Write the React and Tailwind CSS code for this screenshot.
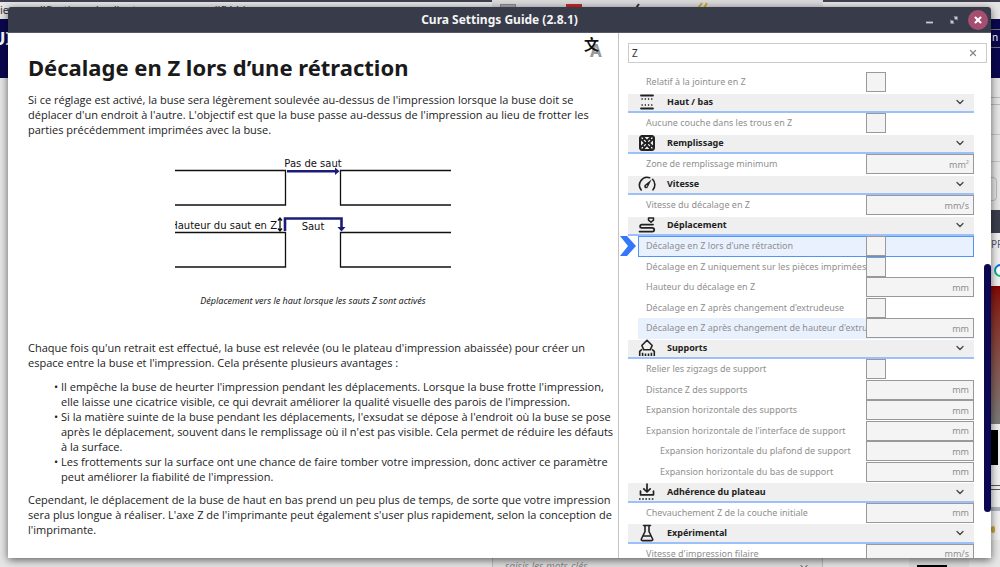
import { useState } from 'react';
import { ChevronDown, X } from 'lucide-react';

const ITEMS = [
    { label: 'Relatif à la jointure en Z' },
    { title: 'Haut / bas', icon: 'topbottom' },
    { label: 'Aucune couche dans les trous en Z' },
    { title: 'Remplissage', icon: 'infill' },
    { label: 'Zone de remplissage minimum', unit: 'mm²' },
    { title: 'Vitesse', icon: 'speed' },
    { label: 'Vitesse du décalage en Z', unit: 'mm/s' },
    { title: 'Déplacement', icon: 'travel' },
    { label: "Décalage en Z lors d'une rétraction", state: 'selected' },
    { label: 'Décalage en Z uniquement sur les pièces imprimées' },
    { label: 'Hauteur du décalage en Z', unit: 'mm' },
    { label: "Décalage en Z après changement d'extrudeuse" },
    { label: "Décalage en Z après changement de hauteur d'extrudeuse", unit: 'mm', state: 'hover' },
    { title: 'Supports', icon: 'support' },
    { label: 'Relier les zigzags de support' },
    { label: 'Distance Z des supports', unit: 'mm' },
    { label: 'Expansion horizontale des supports', unit: 'mm' },
    { label: "Expansion horizontale de l'interface de support", unit: 'mm' },
    { label: 'Expansion horizontale du plafond de support', unit: 'mm', nested: true },
    { label: 'Expansion horizontale du bas de support', unit: 'mm', nested: true },
    { title: 'Adhérence du plateau', icon: 'adhesion' },
    { label: 'Chevauchement Z de la couche initiale', unit: 'mm' },
    { title: 'Expérimental', icon: 'experimental' },
    { label: "Vitesse d'impression filaire", unit: 'mm/s' },
];

const ICONS = {
    topbottom: (
        <>
            <path d="M3 2.5h12M3 15.5h12" strokeWidth="1.8" />
            <path d="M3.5 6h11M3.5 12h11" strokeWidth="1.3" strokeDasharray="1.3 1.9" strokeLinecap="butt" />
        </>
    ),
    infill: (
        <>
            <rect x="1.5" y="1.5" width="15" height="15" rx="2.5" fill="#222" />
            <path d="M6.6 3h4.8L9 5.6zM6.6 15h4.8L9 12.4zM3 6.6v4.8L5.6 9zM15 6.6v4.8L12.4 9z" fill="#f0f0f0" stroke="none" />
            <path d="m6.4 6.4 1 1M11.6 6.4l-1 1M6.4 11.6l1-1M11.6 11.6l-1-1M4 4l.5.5M14 4l-.5.5M4 14l.5-.5M14 14l-.5-.5" stroke="#f0f0f0" strokeWidth="1.3" />
        </>
    ),
    speed: (
        <>
            <path d="M3.2 15A7.8 7.8 0 0 1 11.6 2.7M14.6 4.3a7.8 7.8 0 0 1 .4 10.5" strokeWidth="1.6" />
            <path d="M13.6 4.6 9.8 12.2A1.9 1.9 0 1 1 7.3 9.6z" fill="#222" stroke="none" />
            <circle cx="8.6" cy="11" r=".8" fill="#f0f0f0" stroke="none" />
        </>
    ),
    travel: (
        <>
            <path d="M10.5 2h5v2.2l-2.5 2-2.5-2z" strokeWidth="1.5" />
            <path d="M15 8.6H3.7a1.6 1.6 0 0 0 0 3.2h10.6a1.9 1.9 0 0 1 0 3.8H1.5" strokeWidth="1.8" />
        </>
    ),
    support: (
        <>
            <path d="m9 1.2 5.2 5.3-2 4.3H5.8l-2-4.3z" strokeWidth="1.6" />
            <path d="M1.7 17v-4.7l2.3-2M16.3 17v-4.7l-2.3-2M4.6 17v-3.3M7.5 17v-2.4M10.5 17v-2.4M13.4 17v-3.3" strokeWidth="1.6" strokeLinecap="butt" />
        </>
    ),
    adhesion: (
        <>
            <path d="M9 1v7.5M5.8 5.8 9 9l3.2-3.2M2.5 8v3.8h13V8" strokeWidth="1.7" />
            <path d="M1 16h16" strokeWidth="1.6" strokeDasharray="1.6 1.6" strokeLinecap="butt" />
        </>
    ),
    experimental: (
        <path d="M5.5 1.5h7M7 2v5.5L3.4 15q-.6 1.6 1 1.6h9.2q1.6 0 1-1.6L11 7.5V2M5.6 12h6.8" strokeWidth="1.6" />
    ),
};

function CategoryIcon({ name }) {
    return (
        <svg viewBox="0 0 18 18" className="size-[18px] shrink-0" fill="none" stroke="#222" strokeLinecap="round" strokeLinejoin="round">
            {ICONS[name]}
        </svg>
    );
}

function Category({ title, icon }) {
    return (
        <button className="mt-px flex items-center border-b-2 border-[#9cc0fb] bg-[#efefef] pr-2 pl-2.5 text-left">
            <CategoryIcon name={icon} />
            <span className="ml-[11px] flex-1 text-[9px] leading-[16px] font-bold text-[#222]">{title}</span>
            <ChevronDown className="size-3 text-[#444]" strokeWidth={2.5} />
        </button>
    );
}

function Setting({ id, label, unit, state, nested }) {
    let rowClass = 'border-transparent';
    if (state === 'selected') rowClass = 'border-[#5294f5] bg-[#e9f1fe]';
    if (state === 'hover') rowClass = 'border-transparent bg-[#e9f1fe]';

    return (
        <div className={`relative ml-2.5 flex min-w-0 items-center border ${rowClass}`}>
            {state === 'selected' && (
                <svg viewBox="0 0 16 20" className="absolute -left-[19px] h-5 w-4">
                    <path d="M0 0h7l9 10-9 10H0l8-10z" fill="#3477fb" />
                </svg>
            )}
            <label
                htmlFor={id}
                className={`min-w-0 flex-1 overflow-hidden text-[9px] leading-[16px] whitespace-nowrap text-[#8f8f8f] ${nested ? 'pl-[21px]' : 'pl-[7px]'}`}
            >
                {label}
            </label>
            <div className="-mr-px flex w-[108px] shrink-0">
                {unit ? (
                    <div className="flex h-5 w-full items-center border border-[#999] bg-[#f4f4f4] pr-1 text-[9px] text-[#8f8f8f]">
                        <input id={id} type="text" disabled className="w-full min-w-0 flex-1" />
                        <span>{unit}</span>
                    </div>
                ) : (
                    <input id={id} type="checkbox" disabled className="size-5 appearance-none border border-[#999] bg-[#f4f4f4]" />
                )}
            </div>
        </div>
    );
}

function HopDiagram() {
    return (
        <svg viewBox="175 150 276 130" className="mx-auto mt-[13px] h-[130px] w-[276px]" fill="none" fontFamily="DejaVu Sans, sans-serif" fontSize="10">
            <path d="M175 170.5h110.5V205H175M451 170.5H340.5V205H451" stroke="#111" strokeWidth="1.3" />
            <path d="M175 232.5h110.5V267H175M451 232.5H340.5V267H451" stroke="#111" strokeWidth="1.3" />
            <path d="M287 171.2h49" stroke="#1c1c78" strokeWidth="2.4" />
            <path d="m335 167.5 4.5 3.7-4.5 3.7z" fill="#1c1c78" />
            <path d="M285 231v-12.5h56.5V228" stroke="#1c1c78" strokeWidth="2.6" />
            <path d="M337.5 227h8l-4 4.5z" fill="#1c1c78" />
            <path d="M280 219v11M278 220.5l2-2.5 2 2.5M278 228.5l2 2.5 2-2.5" stroke="#111" strokeWidth="1.3" />
            <text x="313" y="167" textAnchor="middle" fill="#111">Pas de saut</text>
            <text x="277" y="229" textAnchor="end" fill="#111">Hauteur du saut en Z</text>
            <text x="313" y="230" textAnchor="middle" fill="#111">Saut</text>
        </svg>
    );
}

function Article() {
    return (
        <article className="relative min-w-0 flex-1 overflow-hidden pt-[19px] pr-4 pl-5 font-['Open_Sans','Noto_Sans',sans-serif] text-[11px] leading-[15px] whitespace-nowrap text-[#222]">
            <button aria-label="Langue" className="absolute top-1 right-3.5 size-5">
                <svg viewBox="0 0 20 20" className="size-5">
                    <text x="6" y="20" fontSize="17" fontWeight="700" fill="#999" fontFamily="Noto Sans, sans-serif">A</text>
                    <text x="0" y="13" fontSize="15" fontWeight="700" fill="#111" fontFamily="Noto Sans CJK SC, sans-serif">文</text>
                </svg>
            </button>
            <h1 className="mb-2.5 font-['Noto_Sans',sans-serif] text-[22px] leading-[30px] font-bold text-[#1a1a1a]">
                Décalage en Z lors d’une rétraction
            </h1>
            <p>
                Si ce réglage est activé, la buse sera légèrement soulevée au-dessus de l'impression lorsque la buse doit se<br />
                déplacer d'un endroit à l'autre. L'objectif est que la buse passe au-dessus de l'impression au lieu de frotter les<br />
                parties précédemment imprimées avec la buse.
            </p>
            <figure className="mr-1">
                <HopDiagram />
                <figcaption className="mt-[13px] text-center font-['Noto_Sans',sans-serif] text-[9px] italic">
                    Déplacement vers le haut lorsque les sauts Z sont activés
                </figcaption>
            </figure>
            <p className="mt-8">
                Chaque fois qu'un retrait est effectué, la buse est relevée (ou le plateau d'impression abaissée) pour créer un<br />
                espace entre la buse et l'impression. Cela présente plusieurs avantages :
            </p>
            <ul className="mt-[9px] mb-2 ml-[33px] *:relative *:before:absolute *:before:-left-[7px] *:before:content-['•']">
                <li>
                    Il empêche la buse de heurter l'impression pendant les déplacements. Lorsque la buse frotte l'impression,<br />
                    elle laisse une cicatrice visible, ce qui devrait améliorer la qualité visuelle des parois de l'impression.
                </li>
                <li>
                    Si la matière suinte de la buse pendant les déplacements, l'exsudat se dépose à l'endroit où la buse se pose<br />
                    après le déplacement, souvent dans le remplissage où il n'est pas visible. Cela permet de réduire les défauts<br />
                    à la surface.
                </li>
                <li>
                    Les frottements sur la surface ont une chance de faire tomber votre impression, donc activer ce paramètre<br />
                    peut améliorer la fiabilité de l'impression.
                </li>
            </ul>
            <p>
                Cependant, le déplacement de la buse de haut en bas prend un peu plus de temps, de sorte que votre impression<br />
                sera plus longue à réaliser. L'axe Z de l'imprimante peut également s'user plus rapidement, selon la conception de<br />
                l'imprimante.
            </p>
        </article>
    );
}

function SettingsPanel() {
    const [query, setQuery] = useState('Z');

    return (
        <aside className="relative flex w-[373px] shrink-0 flex-col overflow-hidden border-l border-[#c4c4c4] pl-[9px]">
            <div className="mt-2.5 mr-1 flex h-5 shrink-0 items-center border border-[#ccc] pr-2">
                <input
                    type="text"
                    aria-label="Rechercher"
                    value={query}
                    onChange={(e) => setQuery(e.target.value)}
                    className="min-w-0 flex-1 pl-[3px] text-[10px] text-[#333] outline-none"
                />
                <button aria-label="Effacer" onClick={() => setQuery('')}>
                    <X className="size-2.5 text-[#888]" strokeWidth={3} />
                </button>
            </div>
            <div className="mt-[9px] mr-[17px] grid h-[492px] shrink-0 auto-rows-fr grid-cols-1">
                {ITEMS.map((item, index) =>
                    item.title ? <Category key={index} {...item} /> : <Setting key={index} id={`setting-${index}`} {...item} />
                )}
            </div>
            <div className="absolute inset-y-0 right-0 flex w-[7px] flex-col">
                <div className="flex-[231]" />
                <div className="flex-[248] rounded-full bg-[#0b0750]" />
                <div className="flex-[46]" />
            </div>
        </aside>
    );
}

function TitleBar() {
    return (
        <header className="relative flex h-[26px] shrink-0 items-center justify-end gap-1.5 rounded-t-[3px] border-b border-[#555866] bg-[#383c4a] pr-[3px] text-[#c9cbd0]">
            <h2 className="absolute inset-x-0 text-center text-[12px] font-bold text-[#f4f4f4]">Cura Settings Guide (2.8.1)</h2>
            <button aria-label="Réduire" className="relative size-4">
                <svg viewBox="0 0 16 16" className="size-4"><path d="M2 10.5h7" stroke="currentColor" strokeWidth="1.8" /></svg>
            </button>
            <button aria-label="Agrandir" className="relative size-4">
                <svg viewBox="0 0 16 16" className="size-4">
                    <path d="M7.5 4.5h4v4zM4.5 7.5v4h4z" fill="currentColor" />
                    <path d="m5.5 10.5 1.8-1.8M8.7 7.3l1.8-1.8" stroke="currentColor" strokeWidth="1.4" />
                </svg>
            </button>
            <button aria-label="Fermer" className="relative flex size-5 items-center justify-center rounded-full bg-[#a54e6f] text-white">
                <X className="size-2.5" strokeWidth={5} />
            </button>
        </header>
    );
}

// Other windows on the desktop, mostly hidden behind the guide
function Desktop() {
    return (
        <div aria-hidden="true" className="absolute inset-0 overflow-hidden bg-[#e6e6e6] text-[11px] text-[#333]">
            <div className="absolute inset-x-0 top-0 h-0.5 bg-[#3f4150]" />
            <div className="absolute top-0.5 left-0">ie</div>
            <div className="absolute top-0.5 left-9">difications du client avec cura, modifié bien</div>
            <div className="absolute top-[19px] left-0 h-[59px] w-full bg-[#0b0750] text-white">
                <span className="absolute top-1.5 -left-2 text-[18px] font-bold">UI</span>
                <span className="absolute top-2.5 right-0 h-[19px] w-3 border-y border-[#777] pl-1 text-[10px]">n</span>
            </div>
            <div className="absolute top-0 left-[492px] h-4 w-[331px] bg-[#d9d9db]">
                <div className="absolute top-1 left-2 h-3 w-4 border border-[#888] bg-[#aaa]" />
                <div className="absolute top-1 left-[74px] h-3 w-4 bg-[#c62828]" />
                <svg viewBox="0 0 100 8" className="absolute top-0 left-36 h-2 w-[100px]">
                    <path d="m0 8 3-4" stroke="#333" strokeWidth="2" />
                    <path d="M62 8l4-5M68 8l3-5" stroke="#c9a820" strokeWidth="2" />
                </svg>
            </div>
            <div className="absolute top-[97px] right-0 h-2 w-6 border-y border-[#bbb]" />
            <div className="absolute top-[134px] right-0 h-7 w-6 border-y border-[#c5c5c5]" />
            <div className="absolute top-[177px] right-[3px] h-6 w-6 rounded-sm border border-[#bbb]" />
            <div className="absolute top-[210px] right-0 h-[330px] w-6 bg-[#f0f0f0]">
                <div className="h-[23px] bg-[#3b3f4d]" />
                <div className="absolute top-[27px] left-[15px] text-[10px] text-[#555a70]">PP</div>
                <div className="absolute top-[54px] left-[18px] size-[13px] rounded-full bg-conic from-red-600 via-green-500 to-blue-600" />
                <div className="absolute top-[56px] left-[20px] size-[9px] rounded-full bg-white" />
                <div className="absolute top-[76px] h-[138px] w-full bg-linear-to-b from-[#840303] to-[#7a7a7a]" />
                <div className="absolute top-[220px] h-[35px] w-[22px] bg-black" />
                <div className="absolute top-[275px] h-[5px] w-full border-y border-[#555]" />
                <div className="absolute top-[297px] h-1 w-full bg-[#aeb0bb]" />
                <div className="absolute top-[316px] left-[15px] h-[7px] w-1 rounded-full bg-[#c9a83c]" />
            </div>
            <div className="absolute bottom-0 left-[492px] h-3 w-[331px] border-x border-[#bbb] bg-[#dedede]">
                <span className="absolute top-1 left-3 text-[10px] text-[#888] italic">saisis les mots-clés</span>
                <ChevronDown className="absolute top-1.5 right-3 size-3" />
            </div>
            <div className="absolute bottom-0 left-[909px] h-3 w-[60px] bg-[#dcdcdc]">
                <div className="absolute bottom-0 left-2 h-0.5 w-[30px] bg-black" />
            </div>
        </div>
    );
}

function App() {
    return (
        <div className="relative flex h-screen overflow-hidden pt-[7px] pr-[9px] pb-[9px] pl-2 font-['Noto_Sans',sans-serif]">
            <Desktop />
            <main className="relative flex min-w-0 flex-1 flex-col rounded-t-[3px] bg-white shadow-[0_2px_9px_rgba(0,0,0,0.6)]">
                <TitleBar />
                <div className="flex min-h-0 flex-1">
                    <Article />
                    <SettingsPanel />
                </div>
            </main>
        </div>
    );
}

export default App;
